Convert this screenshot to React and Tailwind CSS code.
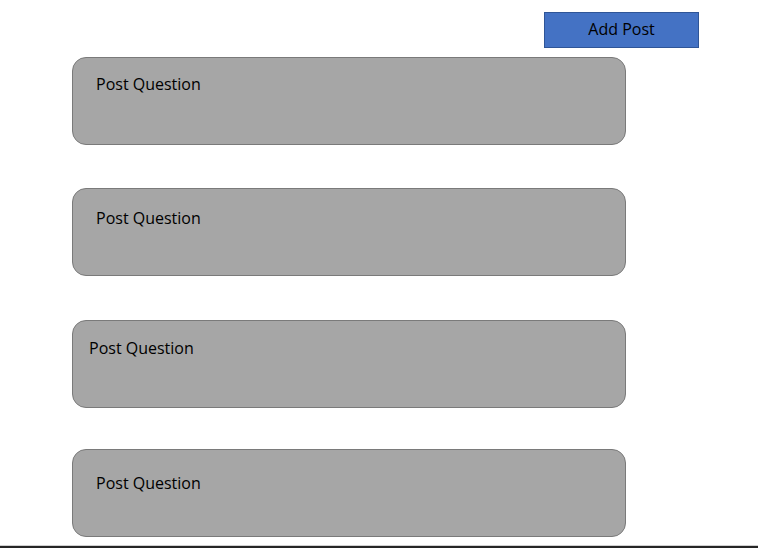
export default function App() {
  const posts = [
    { id: 1, pad: 'pt-[14px] pl-[23px]', mt: 'mt-[9px]' },
    { id: 2, pad: 'pt-[17px] pl-[23px]', mt: 'mt-[43px]' },
    { id: 3, pad: 'pt-[15px] pl-[16px]', mt: 'mt-[44px]' },
    { id: 4, pad: 'pt-[21px] pl-[23px]', mt: 'mt-[41px]' },
  ];

  return (
    <div className="w-[758px] h-[548px] bg-white flex flex-col font-['Open_Sans',sans-serif] text-black overflow-hidden">
      <div className="flex pt-[12px] pl-[544px]">
        <button className="w-[155px] h-[36px] pb-[2px] bg-[#4472c4] border border-[#2f5597] text-[16px] leading-none flex items-center justify-center">
          Add Post
        </button>
      </div>

      {posts.map((post) => (
        <div
          key={post.id}
          className={`${post.mt} ml-[72px] w-[554px] h-[88px] rounded-[14px] bg-[#a6a6a6] border border-[#7a7a7a] ${post.pad}`}
        >
          <p className="text-[16px] leading-6">Post Question</p>
        </div>
      ))}

      <div className="mt-auto h-[3px] border-t border-[#d0d0d0] bg-[#262626]" />
    </div>
  );
}
